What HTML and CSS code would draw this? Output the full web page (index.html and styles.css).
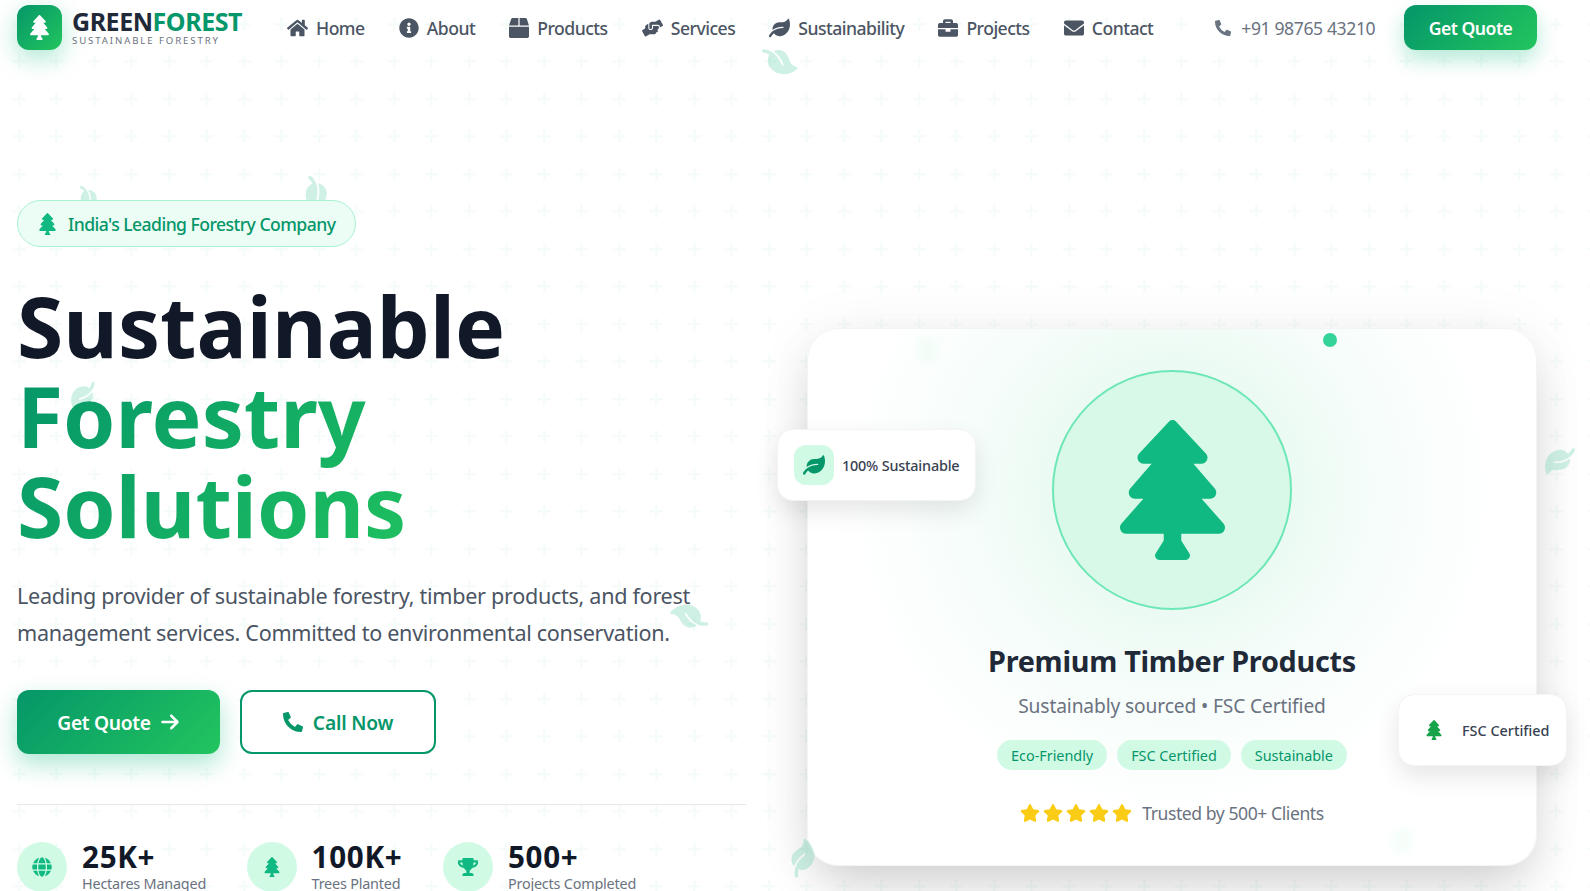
FILE: index.html
```html
<!DOCTYPE html>
<html lang="en">
<head>
<meta charset="utf-8">
<title>GreenForest</title>
<link rel="stylesheet" href="styles.css">
</head>
<body>
<svg class="defs" width="0" height="0" aria-hidden="true">
<symbol id="i-tree" viewBox="0 0 384 512"><path d="M378.31 378.49L298.42 288h30.63c9.01 0 16.98-5 20.78-13.06 3.8-8.04 2.55-17.26-3.28-24.05L268.42 160h28.89c9.1 0 17.3-5.35 20.86-13.61 3.52-8.13 1.86-17.59-4.24-24.08L203.66 4.83c-6.03-6.45-17.28-6.45-23.32 0L70.06 122.31c-6.1 6.49-7.75 15.95-4.24 24.08C69.38 154.65 77.59 160 86.69 160h28.89l-78.14 90.91c-5.81 6.78-7.06 15.99-3.27 24.04C37.97 283 45.93 288 54.95 288h30.63L5.69 378.49c-6 6.79-7.36 16.09-3.56 24.26 3.75 8.05 12 13.25 21.01 13.25H160v24.45l-30.29 48.4c-5.32 10.64 2.42 23.16 14.31 23.16h95.96c11.89 0 19.63-12.52 14.31-23.16L224 440.45V416h136.86c9.01 0 17.26-5.2 21.01-13.25 3.8-8.17 2.44-17.47-3.56-24.26z"/></symbol>
<symbol id="i-leaf" viewBox="0 0 576 512"><path d="M546.2 9.7c-5.6-12.5-21.6-13-28.3-1.2C486.9 62.4 431.4 96 368 96h-80C182 96 96 182 96 288c0 7 .8 13.7 1.5 20.5C161.3 262.8 253.4 224 384 224c8.8 0 16 7.2 16 16s-7.2 16-16 16C132.6 256 26 410.1 2.4 468c-6.6 16.3 1.2 34.9 17.5 41.6 16.4 6.8 35-1.1 41.8-17.3 1.5-3.6 20.9-47.9 71.9-90.6 32.4 43.9 94 85.8 174.9 77.2C465.5 467.5 576 326.7 576 154.3c0-50.2-10.8-102.2-29.8-144.6z"/></symbol>
<symbol id="i-home" viewBox="0 0 576 512"><path d="M280.37 148.26L96 300.11V464a16 16 0 0 0 16 16l112.06-.29a16 16 0 0 0 15.92-16V368a16 16 0 0 1 16-16h64a16 16 0 0 1 16 16v95.64a16 16 0 0 0 16 16.05L464 480a16 16 0 0 0 16-16V300L295.67 148.26a12.19 12.19 0 0 0-15.3 0zM571.6 251.47L488 182.56V44.05a12 12 0 0 0-12-12h-56a12 12 0 0 0-12 12v72.61L318.47 43a48 48 0 0 0-61 0L4.34 251.47a12 12 0 0 0-1.6 16.9l25.5 31A12 12 0 0 0 45.15 301l235.22-193.74a12.19 12.19 0 0 1 15.3 0L530.9 301a12 12 0 0 0 16.9-1.6l25.5-31a12 12 0 0 0-1.7-16.93z"/></symbol>
<symbol id="i-info" viewBox="0 0 512 512"><path d="M256 8C119.043 8 8 119.083 8 256c0 136.997 111.043 248 248 248s248-111.003 248-248C504 119.083 392.957 8 256 8zm0 110c23.196 0 42 18.804 42 42s-18.804 42-42 42-42-18.804-42-42 18.804-42 42-42zm56 254c0 6.627-5.373 12-12 12h-88c-6.627 0-12-5.373-12-12v-24c0-6.627 5.373-12 12-12h12v-64h-12c-6.627 0-12-5.373-12-12v-24c0-6.627 5.373-12 12-12h64c6.627 0 12 5.373 12 12v100h12c6.627 0 12 5.373 12 12v24z"/></symbol>
<symbol id="i-box" viewBox="0 0 512 512"><path d="M509.5 184.6L458.9 32.8C452.4 13.2 434.1 0 413.4 0H272v192h238.7c-.4-2.5-.4-5-1.2-7.4zM240 0H98.6c-20.7 0-39 13.2-45.5 32.8L2.5 184.6c-.8 2.4-.8 4.9-1.2 7.4H240V0zM0 224v240c0 26.5 21.5 48 48 48h416c26.5 0 48-21.5 48-48V224H0z"/></symbol>
<symbol id="i-hands" viewBox="0 0 640 512"><path d="M488 192H336v56c0 39.7-32.3 72-72 72s-72-32.3-72-72V126.4l-64.9 39C107.8 176.9 96 197.8 96 220.2v47.3l-80 46.2C.7 322.5-4.6 342.1 4.3 357.4l80 138.6c8.8 15.3 28.4 20.5 43.7 11.7L231.4 448H368c35.3 0 64-28.7 64-64h16c17.7 0 32-14.3 32-32v-64h8c13.3 0 24-10.7 24-24v-48c0-13.3-10.7-24-24-24zm147.7-37.4L555.7 16C546.9.7 527.3-4.5 512 4.3L408.6 64H306.4c-12 0-23.7 3.4-33.9 9.7L239 94.6c-9.4 5.8-15 16.1-15 27.1V248c0 22.1 17.9 40 40 40s40-17.9 40-40v-88h184c30.9 0 56 25.1 56 56v28.5l80-46.2c15.3-8.9 20.5-28.4 11.7-43.7z"/></symbol>
<symbol id="i-case" viewBox="0 0 512 512"><path d="M320 336c0 8.84-7.16 16-16 16h-96c-8.84 0-16-7.16-16-16v-48H0v144c0 25.6 22.4 48 48 48h416c25.6 0 48-22.4 48-48V288H320v48zm144-208h-80V80c0-25.6-22.4-48-48-48H176c-25.6 0-48 22.4-48 48v48H48c-25.6 0-48 22.4-48 48v80h512v-80c0-25.6-22.4-48-48-48zm-144 0H192V96h128v32z"/></symbol>
<symbol id="i-mail" viewBox="0 0 512 512"><path d="M502.3 190.8c3.9-3.1 9.7-.2 9.7 4.7V400c0 26.5-21.5 48-48 48H48c-26.5 0-48-21.5-48-48V195.6c0-5 5.7-7.8 9.7-4.7 22.4 17.4 52.1 39.5 154.1 113.6 21.1 15.4 56.7 47.8 92.2 47.6 35.7.3 72-32.8 92.3-47.6 102-74.1 131.6-96.3 154-113.7zM256 320c23.2.4 56.6-29.2 73.4-41.4 132.7-96.3 142.8-104.7 173.4-128.7 5.8-4.5 9.2-11.5 9.2-18.9v-19c0-26.5-21.5-48-48-48H48C21.5 64 0 85.5 0 112v19c0 7.4 3.4 14.3 9.2 18.9 30.6 23.9 40.7 32.4 173.4 128.7 16.8 12.2 50.2 41.8 73.4 41.4z"/></symbol>
<symbol id="i-phone" viewBox="0 0 512 512"><path d="M497.39 361.8l-112-48a24 24 0 0 0-28 6.9l-49.6 60.6A370.66 370.66 0 0 1 130.6 204.11l60.6-49.6a23.94 23.94 0 0 0 6.9-28l-48-112A24.16 24.16 0 0 0 122.6.61l-104 24A24 24 0 0 0 0 48c0 256.5 207.9 464 464 464a24 24 0 0 0 23.4-18.6l24-104a24.29 24.29 0 0 0-14.01-27.6z"/></symbol>
<symbol id="i-arrow" viewBox="0 0 448 512"><path d="M438.6 278.6c12.5-12.5 12.5-32.8 0-45.3l-160-160c-12.5-12.5-32.8-12.5-45.3 0s-12.5 32.8 0 45.3L338.8 224 32 224c-17.7 0-32 14.3-32 32s14.3 32 32 32l306.7 0L233.4 393.4c-12.5 12.5-12.5 32.8 0 45.3s32.8 12.5 45.3 0l160-160z"/></symbol>
<symbol id="i-globe" viewBox="0 0 496 512"><path d="M336.5 160C322 70.7 287.8 8 248 8s-74 62.7-88.5 152h177zM152 256c0 22.2 1.2 43.5 3.3 64h185.3c2.1-20.5 3.3-41.8 3.3-64s-1.2-43.5-3.3-64H155.3c-2.1 20.5-3.3 41.8-3.3 64zm324.7-96c-28.6-67.9-86.5-120.4-158-141.6 24.4 33.8 41.2 84.7 50 141.6h108zM177.2 18.4C105.8 39.6 47.8 92.1 19.3 160h108c8.7-56.9 25.5-107.8 49.9-141.6zM487.4 192H372.7c2.1 21 3.3 42.5 3.3 64s-1.2 43-3.3 64h114.6c5.5-20.5 8.6-41.8 8.6-64s-3.1-43.5-8.5-64zM120 256c0-21.5 1.2-43 3.3-64H8.6C3.2 212.5 0 233.8 0 256s3.2 43.5 8.6 64h114.6c-2-21-3.2-42.5-3.2-64zm39.5 96c14.5 89.3 48.7 152 88.5 152s74-62.7 88.5-152h-177zm159.3 141.6c71.4-21.2 129.4-73.7 158-141.6h-108c-8.8 56.9-25.6 107.8-50 141.6zM19.3 352c28.6 67.9 86.5 120.4 158 141.6-24.4-33.8-41.2-84.7-50-141.6h-108z"/></symbol>
<symbol id="i-trophy" viewBox="0 0 576 512"><path d="M552 64H448V24c0-13.3-10.7-24-24-24H152c-13.3 0-24 10.7-24 24v40H24C10.7 64 0 74.7 0 88v56c0 35.7 22.5 72.4 61.9 100.7 31.5 22.7 69.8 37.1 110 41.7C203.3 338.5 240 360 240 360v72h-48c-35.3 0-64 20.7-64 56v12c0 6.6 5.4 12 12 12h296c6.6 0 12-5.4 12-12v-12c0-35.3-28.7-56-64-56h-48v-72s36.7-21.5 68.1-73.6c40.3-4.6 78.6-19 110-41.7 39.3-28.3 61.9-65 61.9-100.7V88c0-13.3-10.7-24-24-24zM99.3 192.8C74.9 175.2 64 155.6 64 144v-16h64.2c1 32.6 5.8 61.2 12.8 86.2-15.1-5.2-29.2-12.4-41.7-21.4zM512 144c0 16.1-17.7 36.1-35.3 48.8-12.5 9-26.7 16.2-41.8 21.4 7-25 11.8-53.6 12.8-86.2H512v16z"/></symbol>
<symbol id="i-star" viewBox="0 0 576 512"><path d="M259.3 17.8L194 150.2 47.9 171.5c-26.2 3.8-36.7 36.1-17.7 54.6l105.7 103-25 145.5c-4.5 26.3 23.2 46 46.4 33.7L288 439.6l130.7 68.7c23.2 12.2 50.9-7.4 46.4-33.7l-25-145.5 105.7-103c19-18.5 8.5-50.8-17.7-54.6L382 150.2 316.7 17.8c-11.7-23.6-45.6-23.9-57.4 0z"/></symbol>
</svg>

<div class="page">
  <svg class="float-leaf fl-nav"><use href="#i-leaf"/></svg>
  <svg class="float-leaf fl-badge-a"><use href="#i-leaf"/></svg>
  <svg class="float-leaf fl-badge-b"><use href="#i-leaf"/></svg>
  <svg class="float-leaf fl-right"><use href="#i-leaf"/></svg>
  <svg class="float-leaf fl-bottom"><use href="#i-leaf"/></svg>

  <header class="topbar">
    <a class="brand">
      <span class="brand-mark"><svg class="ico"><use href="#i-tree"/></svg></span>
      <span class="brand-text">
        <span class="brand-name">GREEN<em>FOREST</em></span>
        <span class="brand-sub">SUSTAINABLE FORESTRY</span>
      </span>
    </a>
    <nav class="nav">
      <a class="nav-link"><svg class="ico w-home"><use href="#i-home"/></svg>Home</a>
      <a class="nav-link"><svg class="ico w-info"><use href="#i-info"/></svg>About</a>
      <a class="nav-link"><svg class="ico w-info"><use href="#i-box"/></svg>Products</a>
      <a class="nav-link"><svg class="ico w-home"><use href="#i-hands"/></svg>Services</a>
      <a class="nav-link"><svg class="ico w-home"><use href="#i-leaf"/></svg>Sustainability</a>
      <a class="nav-link"><svg class="ico w-info"><use href="#i-case"/></svg>Projects</a>
      <a class="nav-link"><svg class="ico w-info"><use href="#i-mail"/></svg>Contact</a>
    </nav>
    <a class="phone"><svg class="ico"><use href="#i-phone"/></svg>+91 98765 43210</a>
    <a class="btn btn-small">Get Quote</a>
  </header>

  <main class="hero">
    <section class="hero-left">
      <div class="pill"><svg class="ico"><use href="#i-tree"/></svg>India's Leading Forestry Company</div>
      <div class="headline-wrap">
        <svg class="float-leaf fl-title"><use href="#i-leaf"/></svg>
        <h1 class="headline">Sustainable <span class="grad">Forestry Solutions</span></h1>
      </div>
      <div class="lead-wrap">
        <svg class="float-leaf fl-lead"><use href="#i-leaf"/></svg>
        <p class="lead">Leading provider of sustainable forestry, timber products, and forest management services. Committed to environmental conservation.</p>
      </div>
      <div class="cta">
        <a class="btn btn-big">Get Quote<svg class="ico"><use href="#i-arrow"/></svg></a>
        <a class="btn-outline"><svg class="ico"><use href="#i-phone"/></svg>Call Now</a>
      </div>
      <div class="stats">
        <div class="stat">
          <span class="stat-ico"><svg class="ico"><use href="#i-globe"/></svg></span>
          <div><div class="stat-num">25K+</div><div class="stat-label">Hectares Managed</div></div>
        </div>
        <div class="stat">
          <span class="stat-ico"><svg class="ico"><use href="#i-tree"/></svg></span>
          <div><div class="stat-num">100K+</div><div class="stat-label">Trees Planted</div></div>
        </div>
        <div class="stat">
          <span class="stat-ico"><svg class="ico"><use href="#i-trophy"/></svg></span>
          <div><div class="stat-num">500+</div><div class="stat-label">Projects Completed</div></div>
        </div>
      </div>
    </section>

    <section class="hero-right">
      <div class="card">
        <span class="dot"></span>
        <span class="blob blob-a"></span>
        <span class="blob blob-b"></span>
        <div class="ring"><svg class="ico"><use href="#i-tree"/></svg></div>
        <h2 class="card-title">Premium Timber Products</h2>
        <p class="card-sub">Sustainably sourced • FSC Certified</p>
        <div class="tags">
          <span class="tag">Eco-Friendly</span>
          <span class="tag">FSC Certified</span>
          <span class="tag">Sustainable</span>
        </div>
        <div class="trust">
          <span class="stars">
            <svg class="ico"><use href="#i-star"/></svg><svg class="ico"><use href="#i-star"/></svg><svg class="ico"><use href="#i-star"/></svg><svg class="ico"><use href="#i-star"/></svg><svg class="ico"><use href="#i-star"/></svg>
          </span>
          <span>Trusted by 500+ Clients</span>
        </div>
        <div class="float-card fc-left">
          <span class="fc-ico"><svg class="ico"><use href="#i-leaf"/></svg></span>100% Sustainable
        </div>
        <div class="float-card fc-right">
          <span class="fc-ico fc-plain"><svg class="ico"><use href="#i-tree"/></svg></span>FSC Certified
        </div>
      </div>
    </section>
  </main>
</div>
</body>
</html>
```

FILE: styles.css
```css
* { box-sizing: border-box; }
html, body { margin: 0; height: 100%; overflow: hidden; }
body {
  font-family: "Noto Sans", "Open Sans", sans-serif;
  color: #111827;
  background: #fff;
}
.defs { position: absolute; }
.ico { display: block; fill: currentColor; flex: none; }
a { color: inherit; text-decoration: none; }

.page {
  position: relative;
  height: 891px;
  overflow: hidden;
  padding: 0 54px 0 17px;
  background-color: #fff;
  background-image: url("data:image/svg+xml,%3Csvg xmlns='http://www.w3.org/2000/svg' width='37.5' height='37.5'%3E%3Cpath d='M17.7 12.5h2.6v13h-2.6zM12.5 17.7h13v2.6h-13z' fill='%2310b981' fill-opacity='.045'/%3E%3C/svg%3E");
  background-size: 37.5px 37.5px;
  background-position: 0 5px;
}

.float-leaf { position: absolute; width: 32px; height: 28px; fill: #10b981; opacity: .2; }
.fl-nav { left: 764px; top: 46px; transform: rotate(70deg); }
.fl-badge-a { left: 78px; top: 187px; width: 24px; height: 22px; transform: rotate(92deg); }
.fl-badge-b { left: 302px; top: 180px; width: 32px; height: 28px; transform: rotate(105deg); }
.fl-right { left: 1545px; top: 448px; width: 30px; height: 27px; transform: rotate(180deg); z-index: 3; }
.fl-bottom { left: 785px; top: 844px; transform: rotate(-35deg); z-index: 3; }
.fl-title { left: 53px; top: 103px; width: 28px; height: 26px; transform: rotate(165deg); }
.fl-lead { left: 656px; top: 27px; transform: rotate(-120deg); }

.topbar {
  position: relative;
  z-index: 2;
  display: flex;
  align-items: center;
  height: 56px;
}
.brand { display: flex; align-items: center; gap: 10px; width: 270px; align-self: flex-start; margin-top: 5px; }
.brand-mark {
  width: 45px; height: 45px; border-radius: 12px;
  display: flex; align-items: center; justify-content: center;
  color: #fff;
  background: linear-gradient(135deg, #059669, #22c55e);
  box-shadow: 0 8px 24px rgba(16, 185, 129, .35);
}
.brand-mark .ico { width: 19px; height: 25px; }
.brand-text { display: flex; flex-direction: column; }
.brand-name { font-size: 25px; line-height: 26px; font-weight: 700; color: #1f2937; letter-spacing: -.45px; }
.brand-name em { font-style: normal; color: #059669; }
.brand-sub { font-size: 9.6px; line-height: 13px; letter-spacing: 1.9px; color: #6b7280; }

.nav { display: flex; align-items: center; gap: 34.2px; }
.nav-link { display: flex; align-items: center; gap: 8px; font-size: 17.6px; font-weight: 500; color: #4b5563; letter-spacing: -.52px; }
.nav-link .ico { height: 20px; width: 20px; }
.nav-link .w-home { width: 21px; }
.phone { display: flex; align-items: center; gap: 10px; margin-left: 62px; font-size: 17.6px; color: #6b7280; letter-spacing: -.4px; }
.phone .ico { width: 16px; height: 16px; }
.btn {
  display: flex; align-items: center; justify-content: center;
  color: #fff; font-weight: 600;
  background: linear-gradient(135deg, #059669, #22c55e);
  box-shadow: 0 10px 20px rgba(16, 185, 129, .3);
  border-radius: 12px;
}
.btn-small { margin: 5px -1px 0 auto; align-self: flex-start; width: 133px; height: 45px; font-size: 17.6px; letter-spacing: -.5px; }

.hero {
  position: relative;
  display: grid;
  grid-template-columns: 730px 730px;
  column-gap: 60px;
}
.hero-left { position: relative; padding-top: 144px; }
.pill {
  position: relative;
  display: inline-flex; align-items: center; gap: 12px;
  height: 47px; padding: 0 20px 0 21px;
  border: 1px solid #a7f3d0; border-radius: 24px;
  background: #ecfdf5; color: #059669;
  font-size: 17.6px; font-weight: 500; letter-spacing: -.55px;
}
.pill .ico { width: 17px; height: 22px; color: #10b981; }
.headline-wrap { position: relative; margin-top: 34px; }
.headline { position: relative; margin: 0; font-size: 84px; line-height: 90px; font-weight: 700; color: #111827; width: 560px; }
.grad {
  display: inline-block;
  background: linear-gradient(135deg, #059669, #22c55e);
  -webkit-background-clip: text;
  background-clip: text;
  color: transparent;
  width: 470px;
}
.lead-wrap { position: relative; margin-top: 26px; }
.lead { position: relative; margin: 0; width: 710px; font-size: 21.6px; line-height: 37px; color: #4b5563; letter-spacing: -.3px; }
.cta { display: flex; gap: 20px; margin-top: 39px; }
.btn-big { width: 203px; height: 64px; gap: 9px; font-size: 19.2px; letter-spacing: -.3px; box-shadow: 0 10px 25px rgba(16, 185, 129, .35); }
.btn-big .ico { width: 20px; height: 20px; }
.btn-outline {
  display: flex; align-items: center; justify-content: center; gap: 10px;
  width: 196px; height: 64px;
  border: 2px solid #059669; border-radius: 12px;
  color: #059669; font-size: 19.2px; font-weight: 600; letter-spacing: -.2px;
  background: #fff;
}
.btn-outline .ico { width: 20px; height: 20px; }
.stats {
  display: flex; gap: 40.5px;
  margin-top: 50px; padding-top: 35px;
  border-top: 1px solid #e5e7eb;
  width: 729px;
}
.stat { display: flex; align-items: center; gap: 15px; }
.stat-ico { width: 50px; height: 50px; border-radius: 50%; background: #d1fae5; color: #10b981; display: flex; align-items: center; justify-content: center; }
.stat-ico .ico { width: 20px; height: 20px; }
.stat-num { font-size: 29.6px; line-height: 34px; font-weight: 700; color: #111827; letter-spacing: .7px; }
.stat-label { font-size: 14.4px; line-height: 20px; color: #6b7280; letter-spacing: -.2px; }

.hero-right { padding-top: 272px; }
.card {
  position: relative;
  height: 538px;
  padding-top: 41px;
  border-radius: 32px;
  border: 1px solid #f3f4f6;
  display: flex; flex-direction: column; align-items: center;
  background: radial-gradient(circle 330px at 50% 160px, #ebfaf3 0, #ebfaf3 36%, #f6fdfa 62%, #fff 100%);
  box-shadow: 0 25px 50px -8px rgba(0, 0, 0, .17), 0 0 60px rgba(0, 0, 0, .05);
}
.dot { position: absolute; left: 515px; top: 4px; width: 14px; height: 14px; border-radius: 50%; background: #34d399; }
.blob { position: absolute; width: 22px; height: 28px; border-radius: 50%; background: #d1fae5; opacity: .2; filter: blur(4px); }
.blob-a { left: 108px; top: 6px; }
.blob-b { left: 583px; top: 498px; }
.ring {
  width: 240px; height: 240px; flex: none; border-radius: 50%;
  border: 2px solid #6ee7b7;
  background: #d8f9e7;
  color: #10b981;
  display: flex; align-items: center; justify-content: center;
}
.ring .ico { width: 105px; height: 140px; }
.card-title { margin: 31px 0 0; font-size: 28.8px; line-height: 40px; font-weight: 700; color: #1f2937; letter-spacing: -.28px; }
.card-sub { margin: 10px 0 0; font-size: 19.2px; line-height: 30px; color: #6b7280; letter-spacing: -.13px; }
.tags { display: flex; gap: 10px; margin-top: 19px; }
.tag { height: 30px; padding: 0 14px; display: flex; align-items: center; border-radius: 15px; background: #d1fae5; color: #059669; font-size: 14.4px; letter-spacing: -.02px; }
.trust { display: flex; align-items: center; gap: 10px; margin-top: 31px; font-size: 17.6px; color: #6b7280; letter-spacing: -.45px; }
.stars { display: flex; gap: 3px; color: #facc15; }
.stars .ico { width: 20px; height: 18px; }
.float-card {
  position: absolute;
  display: flex; align-items: center; gap: 8px;
  background: #fff; border-radius: 16px; border: 1px solid #f3f4f6;
  box-shadow: 0 10px 25px rgba(0, 0, 0, .1);
  font-size: 14.4px; font-weight: 500; color: #374151; letter-spacing: -.2px;
}
.fc-left { left: -31px; top: 100px; width: 199px; height: 72px; padding-left: 16px; }
.fc-right { left: 590px; top: 365px; width: 169px; height: 72px; padding-left: 15px; letter-spacing: 0; }
.fc-ico { width: 40px; height: 40px; border-radius: 12px; background: #d1fae5; color: #059669; display: flex; align-items: center; justify-content: center; flex: none; }
.fc-ico .ico { width: 22px; height: 20px; }
.fc-plain { background: none; color: #16a34a; }
.fc-plain .ico { width: 16px; height: 20px; }
```
